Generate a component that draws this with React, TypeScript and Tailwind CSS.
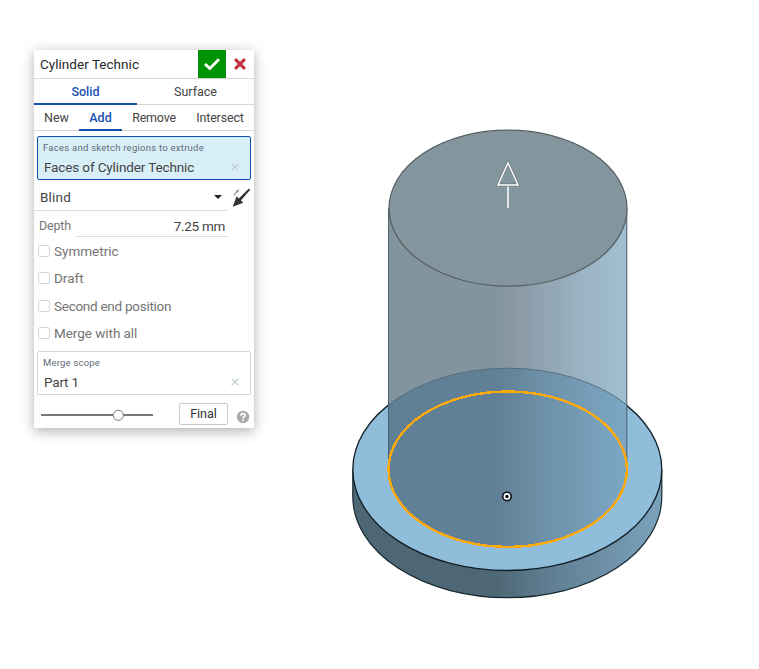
import type { ReactNode } from "react";

function Tab({ className, children }: { className: string; children: ReactNode }) {
  return <div className={`flex h-[26px] items-center justify-center whitespace-nowrap ${className}`}>{children}</div>;
}

function Option({ label, className, tracking }: { label: string; className: string; tracking: string }) {
  return (
    <label className={`flex items-center pl-1 text-[#747474] ${className}`}>
      <span className="size-3 shrink-0 rounded-[2px] border border-[#d8d8d8] bg-white" />
      <span className={`ml-1 text-[13.5px] leading-[18px] ${tracking}`}>{label}</span>
    </label>
  );
}

function Clear() {
  return (
    <svg className="mr-[11px] size-2" viewBox="0 0 8 8" fill="none" stroke="#bfc9cc" strokeWidth="1.2">
      <path d="M.6.6 7.4 7.4M7.4.6.6 7.4" />
    </svg>
  );
}

function Field({ title, value, className, titleTracking, valueTracking }: { title: string; value: string; className: string; titleTracking: string; valueTracking: string }) {
  return (
    <div className={`mx-[3px] h-11 rounded-[2px] border ${className}`}>
      <div className={`pl-[5px] pt-1 text-[9.5px] leading-[14px] text-[#5f6c74] ${titleTracking}`}>{title}</div>
      <div className="flex items-center justify-between pl-1.5 pt-[3px] text-[13.5px] leading-[18px] text-[#444]">
        <span className={valueTracking}>{value}</span>
        <Clear />
      </div>
    </div>
  );
}

function Dialog() {
  return (
    <section className="ml-[34px] mt-[50px] h-[378px] w-[220px] shrink-0 bg-white text-[#444] shadow-[0_3px_12px_rgba(0,0,0,0.32)]">
      <header className="flex h-[29px] border-b border-[#d6d6d6]">
        <div className="flex-1 pl-1.5 text-[13.5px] leading-[29px] tracking-[0.03px] text-[#282828]">Cylinder Technic</div>
        <div className="flex size-7 items-center justify-center bg-[#009404]">
          <svg width="18" height="14" viewBox="0 0 18 14" fill="none" stroke="white" strokeWidth="2.9">
            <path d="m2 7 4.8 4.5L16 2.2" />
          </svg>
        </div>
        <div className="flex h-7 w-7 items-center justify-center">
          <svg width="12" height="12" viewBox="0 0 12 12" fill="none" stroke="#c4303a" strokeWidth="3">
            <path d="m1.1 1.1 9.8 9.8M10.9 1.1l-9.8 9.8" />
          </svg>
        </div>
      </header>
      <nav className="flex h-[26px] border-b border-[#d6d6d6] text-[12.5px]">
        <Tab className="w-[103px] border-b-2 border-[#1651b0] pt-0.5 font-medium text-[#1651b0]">Solid</Tab>
        <Tab className="w-[117px]">Surface</Tab>
      </nav>
      <nav className="flex h-[26px] border-b border-[#d6d6d6] text-[12.5px]">
        <Tab className="w-[45px]">New</Tab>
        <Tab className="w-[43px] border-b-2 border-[#1651b0] pt-0.5 font-medium text-[#1651b0]">Add</Tab>
        <Tab className="w-[64px] tracking-[-0.2px]">Remove</Tab>
        <Tab className="w-[68px] tracking-[-0.15px]">Intersect</Tab>
      </nav>
      <div className="h-[5px]" />
      <Field title="Faces and sketch regions to extrude" value="Faces of Cylinder Technic" className="border-[#1651b0] bg-[#d9eff8]" titleTracking="tracking-[0.25px]" valueTracking="tracking-[-0.13px]" />
      <div className="flex h-[31px]">
        <div className="flex w-[194px] items-center justify-between border-b border-[#dedede] pl-1.5 pr-1.5 pt-1 text-[13.5px]">
          <span className="tracking-[0.2px]">Blind</span>
          <svg width="8" height="4" viewBox="0 0 8 4" fill="#222"><path d="M0 0h8L4 4z" /></svg>
        </div>
        <svg className="ml-1 mt-[8px]" width="19" height="20" viewBox="0 0 19 20">
          <path d="m1.2 7 3.2-3.5-.8-.7 3.5-1.5-1 3.7-.8-.7-3.3 3.5z" fill="#999" />
          <path d="M.7 18.7 4.6 8.3l2.2 2.1L16.9.4l1.3 1.3-9.3 10.8 2.4 2.3z" fill="#333" />
        </svg>
      </div>
      <div className="flex h-[26px] w-[194px] pl-[5px] leading-[30px]">
        <span className="w-[37px] text-[12.5px] tracking-[-0.2px] text-[#777]">Depth</span>
        <span className="flex-1 border-b border-[#dedede] pr-[3px] text-right text-[13.5px] tracking-[-0.3px]">7.25 mm</span>
      </div>
      <Option className="mt-[5px] h-[18px]" label="Symmetric" tracking="tracking-[0px]" />
      <Option className="mt-[9px] h-[18px]" label="Draft" tracking="tracking-[0px]" />
      <Option className="mt-[10px] h-[18px]" label="Second end position" tracking="tracking-[-0.27px]" />
      <Option className="mt-[9px] h-[18px]" label="Merge with all" tracking="tracking-[-0.05px]" />
      <div className="h-[9px]" />
      <Field title="Merge scope" value="Part 1" className="border-[#d6d6d6]" titleTracking="tracking-[0.2px]" valueTracking="tracking-[-0.2px]" />
      <div className="flex h-[33px] items-start pl-[7px] pt-2">
        <svg width="112" height="24" viewBox="0 0 112 24">
          <path d="M0 12h112" stroke="#777" strokeWidth="2" />
          <circle cx="77.3" cy="12.3" r="5.1" fill="white" stroke="#777" />
        </svg>
        <button className="ml-[26px] h-[22px] w-[49px] rounded-[2px] border border-[#c9c9c9] text-[12.5px] leading-5 text-[#303030]">Final</button>
        <svg className="ml-[9px] mt-2 overflow-visible" width="12" height="12" viewBox="0 0 12 12">
          <circle cx="6" cy="6" r="6.2" fill="#aaa" />
          <path d="M3.9 4.6C4 3.3 4.8 2.7 6 2.7c1.3 0 2.1.7 2.1 1.7C8.1 5.6 6.1 5.7 6 7.3" fill="none" stroke="white" strokeWidth="1.8" />
          <path d="M5.1 8.2h1.8v1.7H5.1z" fill="white" />
        </svg>
      </div>
    </section>
  );
}

function Model() {
  return (
    <svg className="ml-[66px] shrink-0" width="400" height="669" viewBox="320 0 400 669">
      <defs>
        <linearGradient id="wall" gradientUnits="userSpaceOnUse" x1="388" x2="627" y1="0" y2="0">
          <stop offset="0" stopColor="#82949d" /><stop offset=".44" stopColor="#82949d" /><stop offset=".53" stopColor="#8999a4" /><stop offset=".78" stopColor="#99b0bf" /><stop offset="1" stopColor="#a1c0d2" />
        </linearGradient>
        <linearGradient id="inside" gradientUnits="userSpaceOnUse" x1="388" x2="627" y1="0" y2="0">
          <stop offset="0" stopColor="#608095" /><stop offset=".46" stopColor="#608095" /><stop offset=".61" stopColor="#6a8da4" /><stop offset=".82" stopColor="#759cb6" /><stop offset="1" stopColor="#7ca7c5" />
        </linearGradient>
        <linearGradient id="rim" gradientUnits="userSpaceOnUse" x1="353" x2="662" y1="0" y2="0">
          <stop offset="0" stopColor="#4e6775" /><stop offset=".46" stopColor="#4e6775" /><stop offset=".66" stopColor="#628196" /><stop offset="1" stopColor="#7ba2bc" />
        </linearGradient>
        <clipPath id="plate"><ellipse cx="507.3" cy="469.5" rx="154.5" ry="101" /></clipPath>
      </defs>
      <path d="M352.8 469.5V496.7a154.5 101 0 0 0 309 0v-27.2" fill="url(#rim)" stroke="#182830" strokeWidth="1.2" />
      <ellipse cx="507.3" cy="469.5" rx="154.5" ry="101" fill="#90bdd9" stroke="#111e25" strokeWidth="1.3" />
      <path d="M388.5 208V469a119 78 0 0 0 238.5 0V208z" fill="url(#wall)" />
      <path clipPath="url(#plate)" d="M388.5 208V469a119 78 0 0 0 238.5 0V208z" fill="url(#inside)" />
      <path d="M388.5 405a154.5 101 0 0 1 238.5 0" fill="none" stroke="#516d7c" />
      <path d="M388.5 208v261M626.8 208v261" stroke="#4d5f69" />
      <ellipse cx="508" cy="208.2" rx="119" ry="78" fill="#83959d" stroke="#565e62" strokeWidth="1.2" />
      <ellipse cx="507.7" cy="469.2" rx="119.2" ry="77.7" fill="none" stroke="#ffa90b" strokeWidth="2.4" shapeRendering="crispEdges" />
      <path d="M508 185.5V208" stroke="#e0e5e8" strokeWidth="2" />
      <path d="m508 163-10 22h20z" fill="none" stroke="#6e7c82" strokeWidth="2.8" />
      <path d="m508 163-10 22h20z" fill="none" stroke="white" strokeWidth="1.5" />
      <circle cx="507" cy="496.4" r="4" fill="#101417" stroke="#0d1215" strokeWidth="2" />
      <circle cx="507" cy="496.4" r="2.6" fill="#101417" stroke="white" strokeWidth="1.7" />
    </svg>
  );
}

export default function App() {
  return (
    <main className="flex h-[669px] w-[759px] items-start overflow-hidden bg-white font-['Roboto',sans-serif]">
      <Dialog />
      <Model />
    </main>
  );
}
